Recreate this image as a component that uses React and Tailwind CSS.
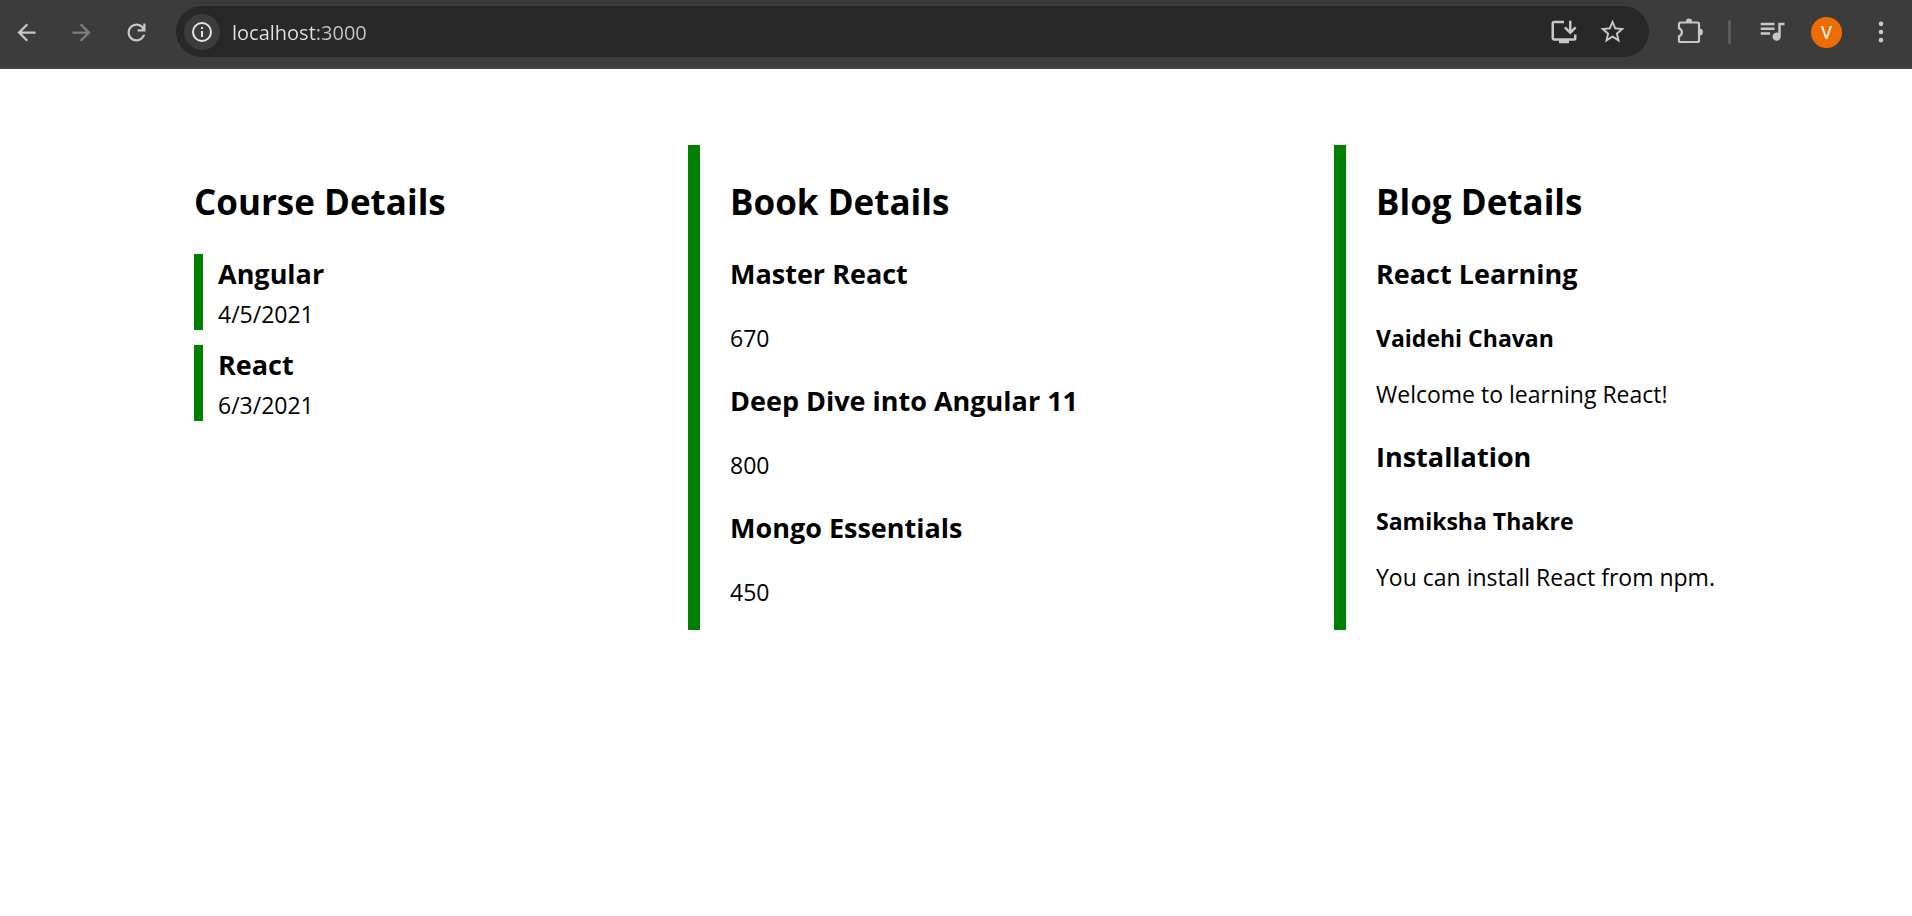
const courses = [
  { name: "Angular", date: "4/5/2021" },
  { name: "React", date: "6/3/2021" },
];
const books = [
  { name: "Master React", price: 670 },
  { name: "Deep Dive into Angular 11", price: 800 },
  { name: "Mongo Essentials", price: 450 },
];
const blogs = [
  { title: "React Learning", author: "Vaidehi Chavan", text: "Welcome to learning React!" },
  { title: "Installation", author: "Samiksha Thakre", text: "You can install React from npm." },
];

function Icon({ size = "size-[27px]", viewBox = "0 0 24 24", children }) {
  return (
    <svg viewBox={viewBox} className={`${size} shrink-0`} fill="currentColor" aria-hidden="true">
      {children}
    </svg>
  );
}

function BarButton({ label, className = "", children }) {
  return (
    <button type="button" aria-label={label} className={`flex shrink-0 items-center justify-center ${className}`}>
      {children}
    </button>
  );
}

function Toolbar() {
  return (
    <header className="flex h-[69px] items-start border-b-2 border-[#474546] bg-[#3c3c3c] pt-[6px] text-[#c7c7c7]">
      <nav className="flex h-[52px] w-[176px] shrink-0 items-center gap-[19px] pl-[8px]">
        <BarButton label="Back" className="size-9">
          <Icon>
            <path d="M20 11H7.83l5.59-5.59L12 4l-8 8 8 8 1.41-1.41L7.83 13H20z" />
          </Icon>
        </BarButton>
        <BarButton label="Forward" className="size-9 text-[#7f7f7f]">
          <Icon>
            <path d="M12 4l-1.41 1.41L16.17 11H4v2h12.17l-5.58 5.59L12 20l8-8z" />
          </Icon>
        </BarButton>
        <BarButton label="Reload" className="size-9">
          <Icon>
            <path d="M12 20q-3.35 0-5.675-2.325T4 12t2.325-5.675T12 4q1.725 0 3.3.713T18 6.75V4h2v7h-7V9h4.2q-.8-1.4-2.187-2.2T12 6Q9.5 6 7.75 7.75T6 12t1.75 4.25T12 18q1.925 0 3.475-1.1T17.65 14h2.1q-.7 2.65-2.85 4.325T12 20" />
          </Icon>
        </BarButton>
      </nav>
      <div className="flex h-[51px] min-w-0 flex-1 items-center rounded-full bg-[#282828] pr-[19px] pl-[8px]">
        <BarButton label="View site information" className="mr-3 size-9 rounded-full bg-[#3c3c3c] text-[#e3e3e3]">
          <Icon size="size-6">
            <path d="M11 7h2v2h-2zm0 4h2v6h-2zm1-9a10 10 0 1 0 0 20 10 10 0 0 0 0-20zm0 18a8 8 0 1 1 0-16 8 8 0 0 1 0 16z" />
          </Icon>
        </BarButton>
        <input
          aria-label="Address"
          defaultValue="localhost:3000"
          className="min-w-0 flex-1 bg-[linear-gradient(90deg,#e3e3e3_84px,#c7c7c7_84px)] bg-clip-text pt-[2px] text-[20px] text-transparent outline-none"
        />
        <BarButton label="Install app" className="mr-3 size-9">
          <Icon size="size-[30px]">
            <path d="M20 17H4V5h8V3H4a2 2 0 0 0-2 2v12c0 1.100.900 2 2 2h4v2h8v-2h4a2 2 0 0 0 2-2v-3h-2zM17 14l5-5-1.410-1.410L18 10.170V3h-2v7.170l-2.590-2.580L12 9z" />
          </Icon>
        </BarButton>
        <BarButton label="Bookmark this page" className="size-9">
          <Icon size="size-[29px]">
            <path d="M22 9.240l-7.190-.620L12 2 9.190 8.630 2 9.240l5.460 4.730L5.820 21 12 17.270 18.180 21l-1.630-7.030zM12 15.400l-3.760 2.270 1-4.280-3.320-2.880 4.380-.380L12 6.100l1.710 4.040 4.380.380-3.320 2.880 1 4.280z" />
          </Icon>
        </BarButton>
      </div>
      <div className="flex h-[52px] shrink-0 items-center">
        <BarButton label="Extensions" className="ml-6 size-9">
          <Icon size="size-[30px]" viewBox="0 0 30 30">
            <path
              d="M4.500 5.500H21.500Q23 5.500 23 7V23.500Q23 25 21.500 25H4.500Q3 25 3 23.500V19.300A4.300 4.300 0 0 0 3 11.200V7Q3 5.500 4.500 5.500z"
              fill="none"
              stroke="currentColor"
              strokeWidth="2.200"
            />
            <path d="M9.800 5A3.200 3.400 0 0 1 16.200 5zM23.500 11.500A3.400 3.500 0 0 1 23.500 18.500z" />
          </Icon>
        </BarButton>
        <span className="ml-[19px] h-6 w-[3px] rounded-full bg-[#5c5c5c]" />
        <BarButton label="Media controls" className="ml-[23px] size-9">
          <Icon size="size-[30px]" viewBox="0 1.5 24 24">
            <path d="M14 6H3v2h11zm0 3.800H3v2h11zM3 15.600h7.500v-2H3zM17 6v8.180A3.300 3.300 0 1 0 19 17V8h3V6z" />
          </Icon>
        </BarButton>
        <BarButton label="Profile" className="ml-[21px] size-[31px] rounded-full bg-[#ef6c00] font-[Roboto,sans-serif] text-[18px] text-white">
          V
        </BarButton>
        <BarButton label="Menu" className="mr-[13px] ml-[21px] size-9">
          <Icon size="size-[28px]">
            <circle cx="12" cy="5" r="2" />
            <circle cx="12" cy="12" r="2" />
            <circle cx="12" cy="19" r="2" />
          </Icon>
        </BarButton>
      </div>
    </header>
  );
}

function Column({ title, divided, children }) {
  return (
    <section className={`pt-8 pb-[22px] ${divided ? "border-l-12 border-[#008000] pl-[30px]" : ""}`}>
      <h1 className="mb-7 text-[35px] leading-[49px] font-bold">{title}</h1>
      {children}
    </section>
  );
}

function Heading({ children }) {
  return <h2 className="text-[27px] leading-[40px] font-bold">{children}</h2>;
}

export default function App() {
  return (
    <div className="min-h-screen bg-white font-['Open_Sans',sans-serif] text-black">
      <Toolbar />
      <main className="grid grid-cols-[minmax(0,494fr)_minmax(0,646fr)_minmax(0,384fr)] px-[194px] pt-[76px] text-[23px] leading-8">
        <Column title="Course Details">
          <div className="flex flex-col gap-[15px]">
            {courses.map((c) => (
              <article key={c.name} className="flex flex-col gap-1 border-l-9 border-[#008000] pl-[15px]">
                <Heading>{c.name}</Heading>
                <p>{c.date}</p>
              </article>
            ))}
          </div>
        </Column>
        <Column title="Book Details" divided>
          <div className="flex flex-col gap-[27px]">
            {books.map((b) => (
              <article key={b.name} className="flex flex-col gap-7">
                <Heading>{b.name}</Heading>
                <p>{b.price}</p>
              </article>
            ))}
          </div>
        </Column>
        <Column title="Blog Details" divided>
          <div className="flex flex-col gap-[27px]">
            {blogs.map((b) => (
              <article key={b.title}>
                <Heading>{b.title}</Heading>
                <h3 className="mt-7 mb-6 font-bold">{b.author}</h3>
                <p>{b.text}</p>
              </article>
            ))}
          </div>
        </Column>
      </main>
    </div>
  );
}
